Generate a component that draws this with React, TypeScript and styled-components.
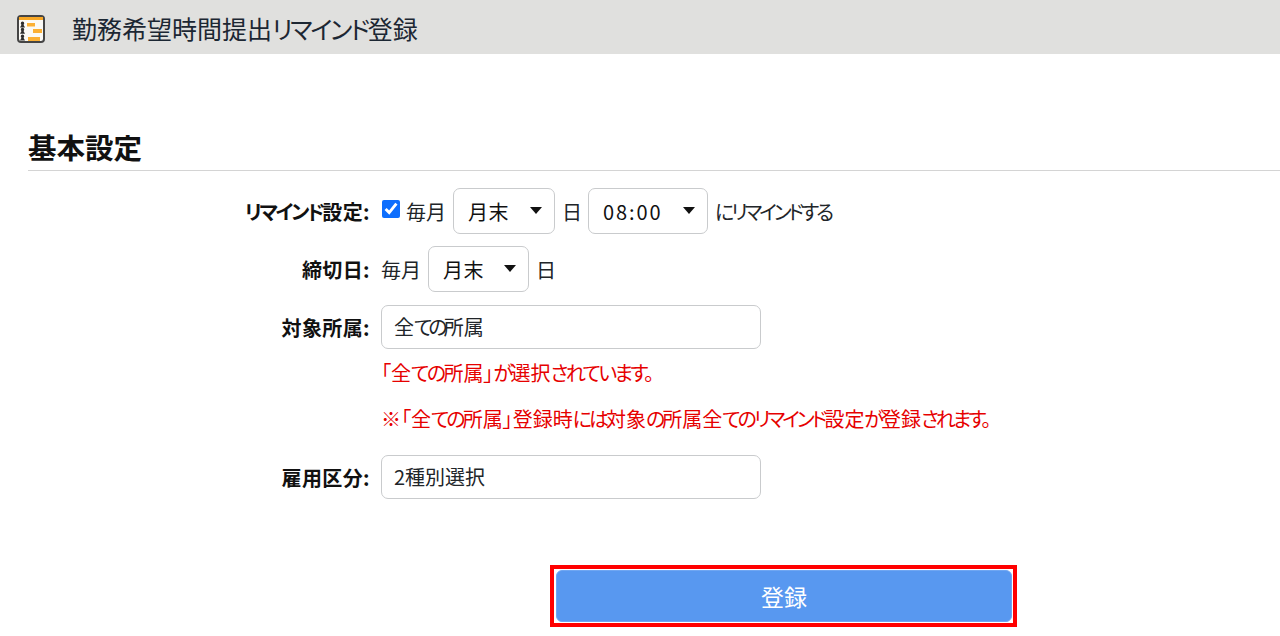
import React from 'react';
import styled, { createGlobalStyle } from 'styled-components';

const GlobalStyle = createGlobalStyle`
    html, body {
        margin: 0;
        background: #fff;
        color: #212529;
        font-family: "Noto Sans CJK JP", "Noto Sans", sans-serif;
        font-feature-settings: "palt";
    }
`

const Page = styled.div`
    width: 1280px;
    height: 636px;
    overflow: hidden;
`

const TitleBar = styled.header`
    height: 54px;
    background-color: #e0e0de;
    display: flex;
    align-items: center;
    padding-left: 17px;
    gap: 27px;
`

const Title = styled.h1`
    margin: 2px 0 0;
    font-size: 25px;
    font-weight: 400;
    color: #1c2733;
`

const IconSvg = styled.svg`
    flex: none;
    margin-top: 4px;
`

/* kana sit narrower than kanji in the original font */
const Kana = styled.span<{ $squeeze?: number }>`
    letter-spacing: ${p => p.$squeeze ?? -0.13}em;
`

const Section = styled.section`
    padding: 76px 0 0 28px;
`

const SectionTitle = styled.h2`
    margin: 0;
    height: 40px;
    line-height: 34px;
    font-size: 28.5px;
    font-weight: 700;
    color: #111;
    border-bottom: 1px solid #d4d4d4;
`

const Form = styled.div`
    padding-top: 11px;
    display: flex;
    flex-direction: column;
`

const Row = styled.div<{ $height: number }>`
    display: flex;
    align-items: center;
    height: ${p => p.$height}px;
`

const Label = styled.label`
    width: 342px;
    flex: none;
    text-align: right;
    font-size: 20px;
    font-weight: 700;
    letter-spacing: 0.4px;
    color: #111;
    margin-right: 11px;
`

const Text = styled.span<{ $pull?: boolean }>`
    font-size: 20px;
    color: #212529;
    margin-right: ${p => (p.$pull ? -1 : 0)}px;
`

const Controls = styled.div`
    display: flex;
    align-items: center;
    gap: 7px;
`

const Check = styled.input`
    width: 18px;
    height: 18px;
    margin: 0 -1px 4px 1px;
    accent-color: #0d6efd;
`

const SelectBox = styled.div<{ $width: number }>`
    position: relative;
    width: ${p => p.$width}px;
    height: 46px;

    &::after {
        content: "";
        position: absolute;
        right: 13px;
        top: 19px;
        border-left: 6.5px solid transparent;
        border-right: 6.5px solid transparent;
        border-top: 7px solid #111;
        pointer-events: none;
    }
`

const Select = styled.select<{ $spacing?: number }>`
    appearance: none;
    width: 100%;
    height: 100%;
    box-sizing: border-box;
    padding: 0 0 0 14px;
    background: #fff;
    border: 1px solid #c9cbcd;
    border-radius: 7px;
    font-family: inherit;
    font-size: 20px;
    letter-spacing: ${p => p.$spacing ?? 0.5}px;
    color: #111;
`

const Field = styled.div`
    width: 380px;
    height: 44px;
    line-height: 42px;
    box-sizing: border-box;
    padding: 0 12px;
    background: #fff;
    border: 1px solid #c9cbcd;
    border-radius: 7px;
    font-size: 20px;
    color: #212529;
`

const Notes = styled.div`
    padding-left: 353px;
    margin: 4px 0 17px;
    display: flex;
    flex-direction: column;
    gap: 20px;
`

const Note = styled.p`
    margin: 0;
    font-size: 20px;
    line-height: 26px;
    color: #e60000;
`

const Highlight = styled.div`
    box-sizing: border-box;
    width: 467px;
    height: 62px;
    margin: 60px 0 0 522px;
    border: 4px solid #ff0000;
    padding: 1px 1px 1px 2px;
    background: #fff;
`

const SubmitButton = styled.button`
    display: block;
    width: 100%;
    height: 100%;
    background-color: #5898f0;
    border: 1px solid #6fa6f2;
    border-radius: 6px;
    color: #fff;
    font-family: inherit;
    font-size: 23px;
`

const PersonMark = ({ y }: { y: number }) => (
    <path d={`M5.500 ${y}a1.700 1.700 0 0 1 1.700 1.700c0 .7-.3 1.200-.7 1.500l1.500 2.800H3l1.500-2.800c-.4-.3-.7-.8-.7-1.500A1.700 1.700 0 0 1 5.500 ${y}z`} fill="#2e2e2e" />
)

const GanttIcon = () => (
    <IconSvg width="28" height="28" viewBox="0 0 28 28">
        <rect x="1" y="1" width="26" height="26" rx="3" fill="#fbfaf6" stroke="#454545" strokeWidth="2" />
        <rect x="2" y="2" width="24" height="3" fill="#f9a825" />
        <PersonMark y={6.500} />
        <PersonMark y={12.800} />
        <PersonMark y={19.500} />
        <rect x="10" y="8" width="8" height="3.500" fill="#fbb034" />
        <rect x="16" y="14" width="9" height="4" fill="#fbb034" />
        <rect x="11" y="22" width="12" height="4" fill="#fbb034" />
    </IconSvg>
)

export default function App() {
    return (
        <Page>
            <GlobalStyle />
            <TitleBar>
                <GanttIcon />
                <Title>勤務希望時間提出<Kana $squeeze={-0.09}>リマインド</Kana>登録</Title>
            </TitleBar>
            <Section>
                <SectionTitle>基本設定</SectionTitle>
                <Form>
                    <Row $height={58}>
                        <Label><Kana $squeeze={-0.12}>リマインド</Kana>設定:</Label>
                        <Controls>
                            <Check type="checkbox" defaultChecked />
                            <Text>毎月</Text>
                            <SelectBox $width={102}>
                                <Select defaultValue="月末"><option>月末</option></Select>
                            </SelectBox>
                            <Text $pull>日</Text>
                            <SelectBox $width={120}>
                                <Select $spacing={1.9} defaultValue="08:00"><option>08:00</option></Select>
                            </SelectBox>
                            <Text><Kana $squeeze={-0.155}>にリマインドする</Kana></Text>
                        </Controls>
                    </Row>
                    <Row $height={58}>
                        <Label>締切日:</Label>
                        <Controls>
                            <Text>毎月</Text>
                            <SelectBox $width={101}>
                                <Select defaultValue="月末"><option>月末</option></Select>
                            </SelectBox>
                            <Text>日</Text>
                        </Controls>
                    </Row>
                    <Row $height={58}>
                        <Label>対象所属:</Label>
                        <Field>全<Kana $squeeze={-0.2}>ての</Kana>所属</Field>
                    </Row>
                    <Notes>
                        <Note>「全<Kana>ての</Kana>所属」<Kana>が</Kana>選択<Kana>されています。</Kana></Note>
                        <Note>※「全<Kana $squeeze={-0.15}>ての</Kana>所属」登録時<Kana $squeeze={-0.15}>には</Kana>対象<Kana $squeeze={-0.15}>の</Kana>所属全<Kana $squeeze={-0.15}>ての</Kana><Kana $squeeze={-0.15}>リマインド</Kana>設定<Kana $squeeze={-0.15}>が</Kana>登録<Kana $squeeze={-0.15}>されます。</Kana></Note>
                    </Notes>
                    <Row $height={56}>
                        <Label>雇用区分:</Label>
                        <Field>2種別選択</Field>
                    </Row>
                    <Highlight>
                        <SubmitButton>登録</SubmitButton>
                    </Highlight>
                </Form>
            </Section>
        </Page>
    )
}
